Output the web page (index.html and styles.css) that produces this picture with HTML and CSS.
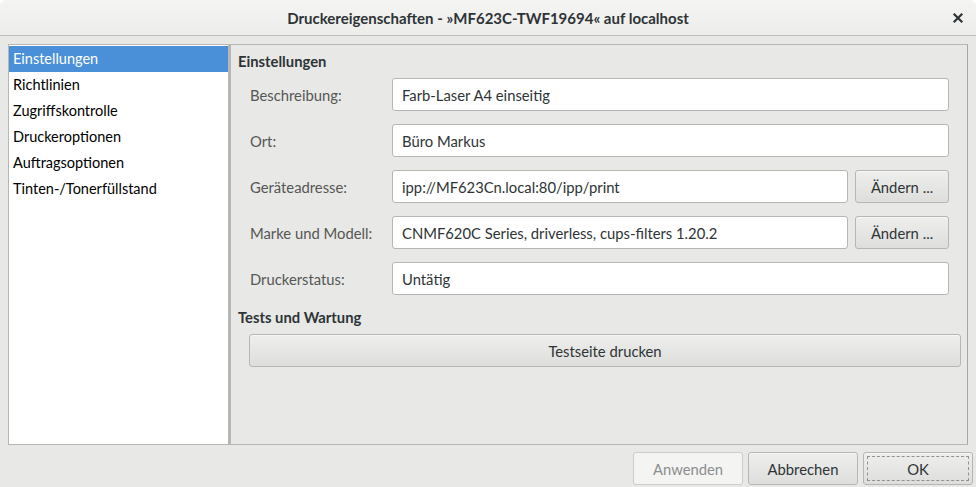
FILE: index.html
```html
<!DOCTYPE html>
<html lang="de">
<head>
<meta charset="utf-8">
<title>Druckereigenschaften</title>
<link rel="stylesheet" href="styles.css">
</head>
<body>
<div class="window">
  <header class="titlebar">
    <span class="title">Druckereigenschaften - »MF623C-TWF19694« auf localhost</span>
    <span class="close" aria-label="Schließen">
      <svg width="12" height="12" viewBox="0 0 12 12"><path d="M2.5 2.5 L9.5 9.5 M9.5 2.5 L2.5 9.5" stroke="#2e3436" stroke-width="2.2" stroke-linecap="square"/></svg>
    </span>
  </header>
  <div class="body">
    <main class="frame">
      <nav class="sidebar">
        <div class="item selected">Einstellungen</div>
        <div class="item">Richtlinien</div>
        <div class="item">Zugriffskontrolle</div>
        <div class="item">Druckeroptionen</div>
        <div class="item">Auftragsoptionen</div>
        <div class="item">Tinten-/Tonerfüllstand</div>
      </nav>
      <section class="content">
        <h2 class="heading">Einstellungen</h2>
        <div class="form">
          <label class="label">Beschreibung:</label>
          <div class="entry span2">Farb-Laser A4 einseitig</div>
          <label class="label">Ort:</label>
          <div class="entry span2">Büro Markus</div>
          <label class="label">Geräteadresse:</label>
          <div class="entry">ipp://MF623Cn.local:80/ipp/print</div>
          <button class="btn change">Ändern ...</button>
          <label class="label">Marke und Modell:</label>
          <div class="entry">CNMF620C Series, driverless, cups-filters 1.20.2</div>
          <button class="btn change">Ändern ...</button>
          <label class="label">Druckerstatus:</label>
          <div class="entry span2">Untätig</div>
        </div>
        <h2 class="heading tests">Tests und Wartung</h2>
        <button class="btn wide">Testseite drucken</button>
      </section>
    </main>
    <footer class="actions">
      <button class="btn action disabled">Anwenden</button>
      <button class="btn action">Abbrechen</button>
      <button class="btn action focus"><span class="focusring">OK</span></button>
    </footer>
  </div>
</div>
</body>
</html>
```
FILE: styles.css
```css
* { box-sizing: border-box; }
html, body { margin: 0; padding: 0; }
body {
  width: 976px;
  height: 487px;
  background: #ffffff;
  font-family: Lato, "Noto Sans", sans-serif;
  font-size: 14.8px;
  color: #2e3436;
  overflow: hidden;
}
.window {
  width: 976px;
  height: 487px;
  background: #e8e8e7;
  border-radius: 7px 7px 0 0;
  display: flex;
  flex-direction: column;
}
.titlebar {
  height: 36px;
  flex: none;
  border-radius: 7px 7px 0 0;
  background: linear-gradient(#f4f4f3, #ededec);
  border-bottom: 1px solid #bfbfbc;
  display: flex;
  align-items: center;
  justify-content: center;
  position: relative;
}
.title {
  font-weight: bold;
  font-size: 15px;
  color: #2e3436;
}
.close {
  position: absolute;
  right: 12px;
  top: 12px;
  width: 12px;
  height: 12px;
  display: block;
}
.close svg { display: block; }
.body {
  padding: 8px 8px 0 8px;
}
.frame {
  height: 401px;
  border: 1px solid #b6b6b3;
  border-right-color: #a6a6a3;
  display: flex;
}
.sidebar {
  width: 222px;
  flex: none;
  background: #ffffff;
  border-right: 3px solid #b6b6b3;
  padding-top: 1px;
  font-size: 14.5px;
}
.item {
  height: 26px;
  line-height: 26px;
  padding-left: 4px;
  color: #000000;
}
.item.selected {
  background: #4a90d9;
  color: #ffffff;
}
.content {
  flex: 1;
  min-width: 0;
  padding: 6px 0 0 7px;
}
.heading {
  margin: 0;
  font-size: 14.8px;
  font-weight: bold;
  color: #2e3436;
  height: 20px;
  line-height: 20px;
}
.form {
  display: grid;
  grid-template-columns: 135px 456px 94px;
  column-gap: 7px;
  row-gap: 13px;
  margin: 7px 0 0 12px;
}
.label {
  display: flex;
  align-items: center;
  color: #555753;
  height: 33px;
}
.entry {
  height: 33px;
  background: #ffffff;
  border: 1px solid #b6b6b3;
  border-radius: 3px;
  padding: 0 9px;
  display: flex;
  align-items: center;
  color: #2e3436;
  white-space: nowrap;
  overflow: hidden;
}
.entry.span2 { grid-column: span 2; }
.btn {
  font-family: inherit;
  font-size: 14.8px;
  color: #2e3436;
  background: linear-gradient(#eeeeed, #dededc);
  border: 1px solid #b6b6b3;
  border-radius: 3px;
  height: 33px;
  padding: 0;
  box-shadow: inset 0 1px #ffffff80;
}
.heading.tests { margin-top: 12px; }
.btn.wide {
  display: block;
  width: 712px;
  margin: 7px 0 0 11px;
}
.actions {
  display: flex;
  justify-content: flex-end;
  gap: 5px;
  padding: 7px 0 0 0;
  margin-right: -5px;
}
.btn.action {
  width: 110px;
  height: 33px;
}
.btn.disabled {
  background: #f4f4f3;
  border-color: #cdcdca;
  color: #8b8e8f;
  box-shadow: none;
}
.btn.focus { padding: 3px; }
.focusring {
  display: flex;
  align-items: center;
  justify-content: center;
  height: 100%;
  border: 1px dashed #8f928f;
  border-radius: 1px;
}
```
